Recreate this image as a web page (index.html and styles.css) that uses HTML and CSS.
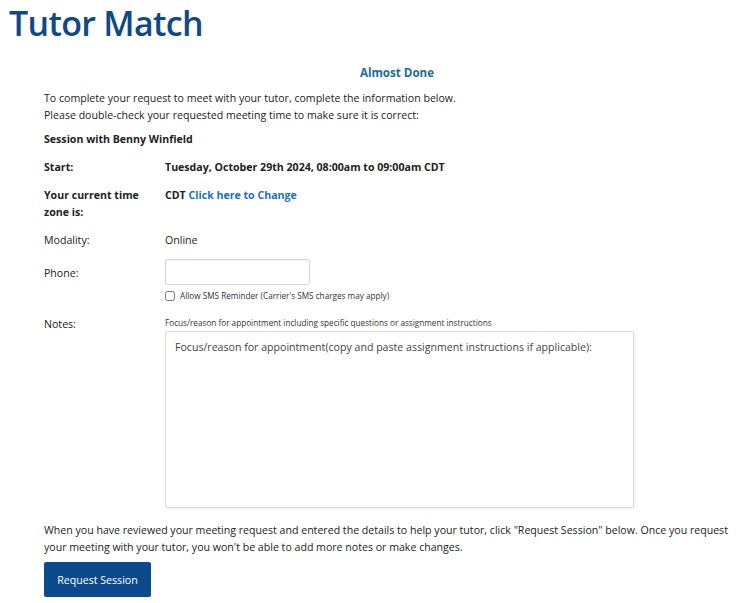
FILE: index.html
```html
<!DOCTYPE html>
<html>
<head>
<meta charset="utf-8">
<link rel="stylesheet" href="styles.css">
</head>
<body>
<h1 class="title">Tutor Match</h1>
<main class="panel">
  <h2 class="heading">Almost Done</h2>
  <p class="intro">To complete your request to meet with your tutor, complete the information below.<br>Please double-check your requested meeting time to make sure it is correct:</p>
  <p class="session">Session with Benny Winfield</p>
  <div class="row">
    <div class="label strong">Start:</div>
    <div class="value strong">Tuesday, October 29th 2024, 08:00am to 09:00am CDT</div>
  </div>
  <div class="row">
    <div class="label strong">Your current time zone is:</div>
    <div class="value strong">CDT <a class="link" href="#">Click here to Change</a></div>
  </div>
  <div class="row">
    <div class="label">Modality:</div>
    <div class="value">Online</div>
  </div>
  <div class="row row-phone">
    <div class="label label-phone">Phone:</div>
    <div class="value">
      <input class="phone" type="text">
      <label class="sms"><input class="check" type="checkbox"> Allow SMS Reminder (Carrier's SMS charges may apply)</label>
    </div>
  </div>
  <div class="row row-notes">
    <div class="label">Notes:</div>
    <div class="value">
      <div class="hint">Focus/reason for appointment including specific questions or assignment instructions</div>
      <textarea class="notes" placeholder="Focus/reason for appointment(copy and paste assignment instructions if applicable):"></textarea>
    </div>
  </div>
  <p class="outro">When you have reviewed your meeting request and entered the details to help your tutor, click "Request Session" below. Once you request your meeting with your tutor, you won't be able to add more notes or make changes.</p>
  <button class="submit" type="button">Request Session</button>
</main>
</body>
</html>
```
FILE: styles.css
```css
html, body {
  margin: 0;
  padding: 0;
  overflow: hidden;
  background: #fff;
}
body {
  font-family: "Open Sans", "Noto Sans", sans-serif;
  font-size: 10.6px;
  color: #222;
  width: 760px;
}
.title {
  margin: 0;
  padding: 0 0 0 9px;
  font-size: 34px;
  line-height: 46px;
  font-weight: 600;
  color: #0f4a88;
  letter-spacing: -0.7px;
}
.panel {
  margin-left: 44px;
  width: 706px;
}
.heading {
  margin: 18px 0 0;
  text-align: center;
  font-size: 11.6px;
  line-height: 18px;
  font-weight: 700;
  color: #1b6c96;
}
.intro {
  margin: 8px 0 0;
  line-height: 17px;
}
.session {
  margin: 7px 0 0;
  font-weight: 700;
  line-height: 17px;
}
.row {
  display: flex;
  margin-top: 11px;
  line-height: 17px;
}
.label {
  width: 121px;
  flex: none;
}
.strong {
  font-weight: 700;
}
.link {
  color: #1a6fc4;
  text-decoration: none;
}
.row-phone {
  margin-top: 10px;
}
.label-phone {
  padding-top: 6px;
}
.phone {
  display: block;
  box-sizing: border-box;
  width: 145px;
  height: 26px;
  margin: 0;
  border: 1px solid #d6d6d6;
  border-radius: 3px;
  box-shadow: inset 0 1px 2px rgba(0,0,0,0.05);
}
.sms {
  display: flex;
  align-items: center;
  margin-top: 4px;
  font-size: 8.2px;
  line-height: 14px;
  color: #333;
}
.check {
  width: 10px;
  height: 10px;
  margin: 0 5px 0 0;
}
.row-notes {
  margin-top: 13px;
}
.hint {
  font-size: 8.2px;
  line-height: 14px;
  color: #333;
}
.notes {
  display: block;
  box-sizing: border-box;
  width: 469px;
  height: 177px;
  margin-top: 1px;
  padding: 8px 9px;
  border: 1px solid #dcdcdc;
  border-radius: 2px;
  box-shadow: 1px 1px 3px rgba(0,0,0,0.08);
  resize: none;
  font-family: "Open Sans", "Noto Sans", sans-serif;
  font-size: 10.6px;
}
.notes::placeholder {
  color: #444;
}
.outro {
  margin: 14px 0 0;
  line-height: 17px;
  width: 696px;
}
.submit {
  margin-top: 6px;
  width: 107px;
  height: 35px;
  border: 0;
  border-radius: 2px;
  background: #0c4a8e;
  color: #fff;
  font-family: "Open Sans", "Noto Sans", sans-serif;
  font-size: 10.6px;
}
```
